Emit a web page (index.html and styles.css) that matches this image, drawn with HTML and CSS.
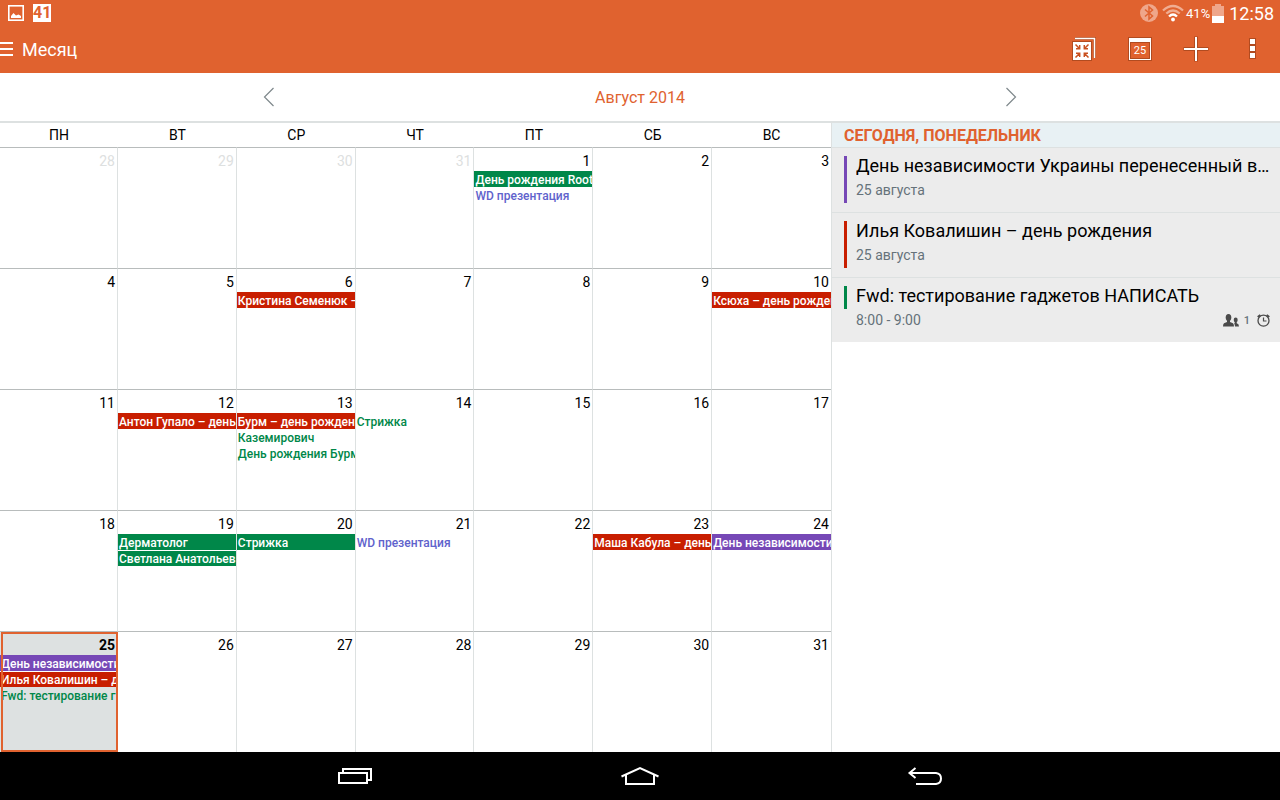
FILE: index.html
```html
<!DOCTYPE html>
<html lang="ru">
<head>
<meta charset="utf-8">
<meta name="viewport" content="width=device-width, initial-scale=1">
<title>Месяц</title>
<link rel="stylesheet" href="styles.css">
</head>
<body>
<header class="top">
  <div class="status">
    <svg class="status-pic" width="16" height="16" viewBox="0 0 16 16" aria-hidden="true"><rect x="0.8" y="0.8" width="14.4" height="14.4" fill="none" stroke="#fff" stroke-width="1.6"/><path d="M3 13V11L5.500 8L8 10.500L10.500 9.500L13 11V13Z" fill="#fff"/></svg>
    <span class="status-badge">41</span>
    <span class="spacer"></span>
    <svg width="18" height="18" viewBox="0 0 18 18" aria-hidden="true"><circle cx="9" cy="9" r="9" fill="#efa68a"/><path d="M5 5.500L12.500 12L9 15V3L12.500 6L5 12.500" fill="none" stroke="#e0622f" stroke-width="1.5"/></svg>
    <svg class="wifi" width="22" height="18" viewBox="0 0 22 18" aria-hidden="true"><g fill="none" stroke-width="2.300"><path d="M1 6.500Q11-2.500 21 6.500M4.300 9.500Q11 3.500 17.700 9.500" stroke="#f0ad92"/><path d="M7 12.500Q11 8.500 15 12.500" stroke="#fff"/></g><circle cx="11" cy="15.500" r="1.900" fill="#fff"/></svg>
    <span class="percent">41%</span>
    <svg class="battery" width="12" height="19" viewBox="0 0 12 19" aria-hidden="true"><path d="M3 0h6v2h3v10H0V2h3Z" fill="#efa68a"/><path d="M0 12h12v7H0Z" fill="#fff"/></svg>
    <span class="clock">12:58</span>
  </div>
  <div class="actions">
    <button class="menu" aria-label="Меню"><svg width="13" height="14" viewBox="0 0 13 14"><path d="M0 1h13M0 7h13M0 13h13" stroke="#fff" stroke-width="2"/></svg></button>
    <h1 class="title">Месяц</h1>
    <span class="spacer"></span>
    <button class="act" aria-label="Свернуть"><svg width="24" height="24" viewBox="0 0 24 24"><path d="M3 1.500H22.500V21" fill="none" stroke="#b14b20" stroke-width="3"/><path d="M3 1.500H22.500V21" fill="none" stroke="#fff" stroke-width="1.500"/><rect x="0.500" y="4.500" width="19" height="19" fill="#fff" stroke="#b14b20"/><g fill="none" stroke="#c9501f" stroke-width="1.500"><path d="M3.500 7.500L7.700 11.700M7.700 8V11.700H4M16.500 7.500L12.300 11.700M12.300 8V11.700H16M3.500 20.500L7.700 16.300M7.700 20V16.300H4M16.500 20.500L12.300 16.300M12.300 20V16.300H16"/></g></svg></button>
    <button class="act day" aria-label="Сегодня, 25">25</button>
    <button class="act" aria-label="Добавить"><svg width="26" height="26" viewBox="0 0 26 26"><path d="M13 0.500V25.500M0.500 13H25.500" stroke="#b14b20" stroke-width="4"/><path d="M13 1V25M1 13H25" stroke="#fff" stroke-width="2"/></svg></button>
    <button class="act" aria-label="Ещё"><svg width="7" height="22" viewBox="0 0 7 22"><g fill="#fff" stroke="#b14b20"><rect x="0.500" y="0.500" width="6" height="6"/><rect x="0.500" y="7.500" width="6" height="6"/><rect x="0.500" y="14.500" width="6" height="6"/></g></svg></button>
  </div>
</header>
<nav class="monthbar" aria-label="Месяц">
  <button aria-label="Предыдущий месяц"><svg width="12" height="20" viewBox="0 0 12 20"><path d="M10.500 1L1.500 10L10.500 19" fill="none" stroke="#7f888c" stroke-width="1.200"/></svg></button>
  <h2>Август 2014</h2>
  <button aria-label="Следующий месяц"><svg width="12" height="20" viewBox="0 0 12 20"><path d="M1.500 1L10.500 10L1.500 19" fill="none" stroke="#7f888c" stroke-width="1.200"/></svg></button>
</nav>
<main>
  <div class="month-wrap">
  <table class="month">
    <thead><tr><th>ПН</th><th>ВТ</th><th>СР</th><th>ЧТ</th><th>ПТ</th><th>СБ</th><th>ВС</th></tr></thead>
    <tbody>
      <tr>
        <td class="other"><div class="date">28</div></td>
        <td class="other"><div class="date">29</div></td>
        <td class="other"><div class="date">30</div></td>
        <td class="other"><div class="date">31</div></td>
        <td><div class="date">1</div><div class="ev fill green">День рождения Root</div><div class="ev t-blue">WD презентация</div></td>
        <td><div class="date">2</div></td>
        <td><div class="date">3</div></td>
      </tr>
      <tr>
        <td><div class="date">4</div></td>
        <td><div class="date">5</div></td>
        <td><div class="date">6</div><div class="ev fill red">Кристина Семенюк –</div></td>
        <td><div class="date">7</div></td>
        <td><div class="date">8</div></td>
        <td><div class="date">9</div></td>
        <td><div class="date">10</div><div class="ev fill red">Ксюха – день рожден</div></td>
      </tr>
      <tr>
        <td><div class="date">11</div></td>
        <td><div class="date">12</div><div class="ev fill red">Антон Гупало – день</div></td>
        <td><div class="date">13</div><div class="ev fill red">Бурм – день рождени</div><div class="ev t-green">Каземирович</div><div class="ev t-green">День рождения Бурм</div></td>
        <td><div class="date">14</div><div class="ev t-green">Стрижка</div></td>
        <td><div class="date">15</div></td>
        <td><div class="date">16</div></td>
        <td><div class="date">17</div></td>
      </tr>
      <tr>
        <td><div class="date">18</div></td>
        <td><div class="date">19</div><div class="ev fill green">Дерматолог</div><div class="ev fill green">Светлана Анатольев</div></td>
        <td><div class="date">20</div><div class="ev fill green">Стрижка</div></td>
        <td><div class="date">21</div><div class="ev t-blue">WD презентация</div></td>
        <td><div class="date">22</div></td>
        <td><div class="date">23</div><div class="ev fill red">Маша Кабула – день</div></td>
        <td><div class="date">24</div><div class="ev fill purple">День независимости</div></td>
      </tr>
      <tr>
        <td class="today"><div class="date">25</div><div class="ev fill purple">День независимости</div><div class="ev fill red">Илья Ковалишин – д</div><div class="ev t-green">Fwd: тестирование г</div></td>
        <td><div class="date">26</div></td>
        <td><div class="date">27</div></td>
        <td><div class="date">28</div></td>
        <td><div class="date">29</div></td>
        <td><div class="date">30</div></td>
        <td><div class="date">31</div></td>
      </tr>
    </tbody>
  </table>
  </div>
  <aside class="agenda">
    <h2>СЕГОДНЯ, ПОНЕДЕЛЬНИК</h2>
    <ul>
      <li><span class="bar purple"></span><div class="info"><h3>День независимости Украины перенесенный выходной</h3><p>25 августа</p></div></li>
      <li><span class="bar red"></span><div class="info"><h3>Илья Ковалишин – день рождения</h3><p>25 августа</p></div></li>
      <li><span class="bar short green"></span><div class="info"><h3>Fwd: тестирование гаджетов НАПИСАТЬ</h3>
        <p>8:00 - 9:00<span class="meta"><svg width="16" height="13" viewBox="0 0 16 13" aria-hidden="true"><g fill="#4b4b4b"><ellipse cx="5.500" cy="3.500" rx="2.800" ry="3.500"/><path d="M4 6h3v2l3 1.300Q11 10 11 12.500H0Q0 10 1 9.300L4 8Z"/><ellipse cx="12.700" cy="6" rx="2" ry="2.400"/><path d="M11.700 8h2v1.200q2.300.6 2.300 3.300h-4q0-2-1-3l.7-.3Z"/></g></svg><span class="count">1</span><svg width="13" height="13" viewBox="0 0 13 13" aria-hidden="true"><g fill="none" stroke="#4b4b4b"><circle cx="6.500" cy="6.700" r="5.500" stroke-width="1.300"/><path d="M6.500 3.500V7H9.500" stroke-width="1.200"/><path d="M.7 3L3.300.8M12.300 3L9.700.8" stroke-width="1.700"/></g></svg></span></p></div></li>
    </ul>
  </aside>
</main>
<footer class="sysnav">
  <button aria-label="Недавние"><svg width="36" height="18" viewBox="0 0 36 18"><g fill="none" stroke="#fff" stroke-width="2"><path d="M6 5V2H34V13H31"/><rect x="2" y="6" width="28" height="10"/></g></svg></button>
  <button aria-label="Домой"><svg width="38" height="20" viewBox="0 0 38 20"><g fill="none" stroke="#fff" stroke-width="2"><path d="M.5 10.500L19 2L37.500 10.500"/><path d="M5 9V18H33V9"/></g></svg></button>
  <button aria-label="Назад"><svg width="36" height="20" viewBox="0 0 36 20"><g fill="none" stroke="#fff" stroke-width="2"><path d="M8.500 2L2.500 7L8.500 12M2.500 7H29Q34 7.500 34 12.500T29 18H9"/></g></svg></button>
</footer>
</body>
</html>
```
FILE: styles.css
```css
* { box-sizing: border-box; }
body {
  margin: 0;
  height: 100vh;
  display: flex;
  flex-direction: column;
  overflow: hidden;
  background: #fff;
  color: #000;
  font-family: Roboto, "Noto Sans", sans-serif;
  font-size: 14px;
}
h1, h2, h3, p, ul { margin: 0; padding: 0; font-weight: 400; }
button {
  display: flex;
  align-items: center;
  justify-content: center;
  padding: 0;
  border: 0;
  background: none;
  color: inherit;
  font: inherit;
}
svg { display: block; flex: none; }
.spacer { flex: 1; }

.top { background: #e0622f; color: #fff; }
.status {
  display: flex;
  align-items: center;
  height: 26px;
  padding: 0 6px 0 8px;
}
.status-badge {
  width: 18px;
  margin-left: 9px;
  background: #fff;
  color: #e0622f;
  font-size: 16px;
  font-weight: 700;
  line-height: 18px;
  text-align: center;
}
.wifi { margin-left: 4px; }
.percent { margin: 0 2px; font-size: 13px; }
.clock { margin-left: 5px; font-size: 18px; }
.actions {
  display: flex;
  align-items: center;
  height: 47px;
}
.menu { width: 13px; height: 47px; padding-bottom: 2px; }
.title { margin-left: 9px; font-size: 18px; }
.act { width: 56px; height: 47px; padding-bottom: 2px; }
.day { position: relative; padding: 2px 0 0; font-size: 11px; }
.day::before {
  content: "";
  position: absolute;
  inset: 12px 17px 13px 17px;
  border: 1px solid #fff;
  border-top-width: 4px;
  outline: 1px solid #b14b20;
  box-shadow: inset 0 0 0 1px #b14b20;
}

.monthbar {
  display: flex;
  align-items: center;
  justify-content: space-between;
  height: 50px;
  padding: 0 20%;
  border-bottom: 2px solid #dde1e1;
}
.monthbar button { width: 26px; height: 48px; }
.monthbar h2 { color: #e0622f; font-size: 16px; }

main {
  flex: 1;
  min-height: 0;
  display: grid;
  grid-template-columns: 65% 35%;
  grid-template-rows: 100%;
}
.month-wrap { border-right: 1px solid #dde1e1; }
.month {
  width: 100%;
  height: 100%;
  table-layout: fixed;
  border-collapse: separate;
  border-spacing: 0;
}
.month th {
  height: 24px;
  padding: 0;
  font-weight: 400;
}
.month th:first-child { width: 118px; }
.month td {
  height: 121px;
  padding: 0;
  vertical-align: top;
  border-top: 1px solid #b8bcbc;
  border-right: 1px solid #dde1e1;
}
.month td:last-child { border-right: 0; }
.date {
  height: 23px;
  padding-right: 2px;
  line-height: 26px;
  text-align: right;
}
.other .date { color: #dde0e0; }
.ev {
  height: 16px;
  padding-left: 1px;
  overflow: hidden;
  white-space: nowrap;
  font-size: 12px;
  font-weight: 500;
  line-height: 18px;
}
.fill { color: #fff; }
.fill + .fill { border-top: 1px solid #fff; line-height: 16px; }
.purple { background: #7648b6; }
.red { background: #c81e00; }
.green { background: #008749; }
.t-blue { color: #6062cc; }
.t-green { color: #008749; }
.month .today { position: relative; background: #dde1e1; }
.today .date { font-weight: 700; }
.today::after {
  content: "";
  position: absolute;
  inset: 0 -1px 0 1px;
  border: 2px solid #e0622f;
}

.agenda { min-width: 0; }
.agenda h2 {
  height: 25px;
  padding-left: 12px;
  border-bottom: 1px solid #dde1e1;
  background: #e8f1f4;
  color: #e0622f;
  font-size: 16px;
  font-weight: 700;
  line-height: 25px;
}
.agenda ul { list-style: none; }
.agenda li {
  display: flex;
  gap: 9px;
  height: 65px;
  padding: 8px 10px 9px 12px;
  border-bottom: 1px solid #dde1e1;
  background: #ececec;
}
.agenda li:last-child { height: 64px; border-bottom: 0; }
.bar { flex: none; width: 3px; }
.short { height: 23px; }
.info { flex: 1; min-width: 0; }
.info h3 {
  margin-right: -6px;
  overflow: hidden;
  font-size: 18px;
  line-height: 20px;
  white-space: nowrap;
  text-overflow: ellipsis;
}
.info p {
  display: flex;
  justify-content: space-between;
  margin-top: 5px;
  color: #65727a;
  line-height: 19px;
}
.meta { display: flex; align-items: center; height: 18px; }
.count { margin: 0 7px 0 5px; font-size: 11px; font-weight: 500; }

.sysnav {
  display: flex;
  align-items: center;
  justify-content: center;
  height: 48px;
  background: #000;
}
.sysnav button { width: 285px; height: 48px; }
```
